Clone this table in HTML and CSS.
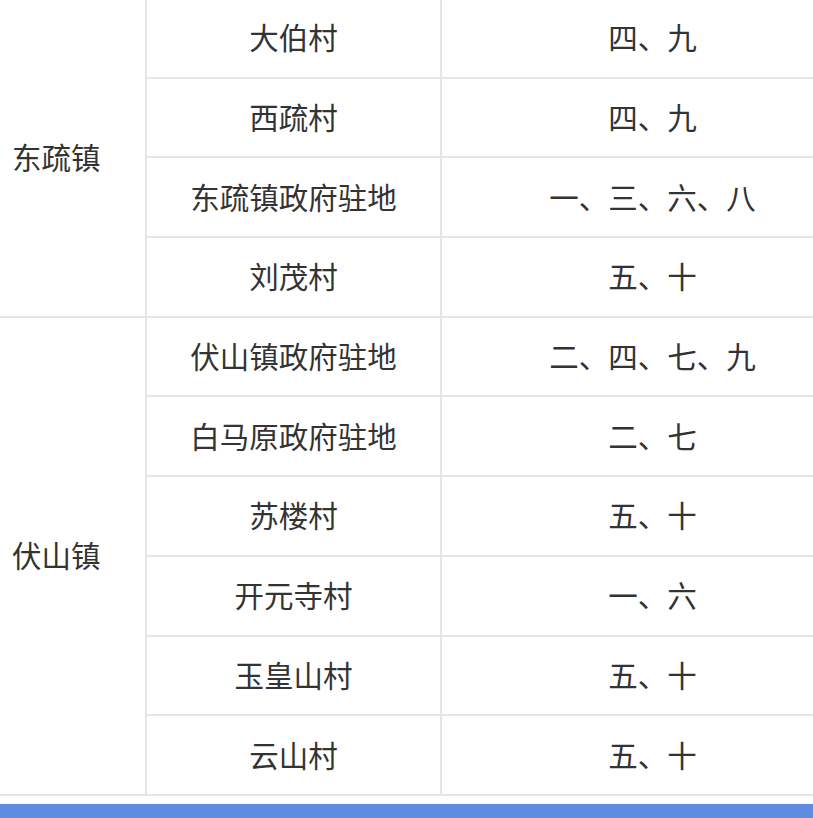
FILE: index.html
```html
<!DOCTYPE html>
<html lang="zh-CN">
<head>
<meta charset="utf-8">
<link rel="stylesheet" href="styles.css">
<title>班车</title>
</head>
<body>
<div class="page">
  <table class="sched">
    <colgroup>
      <col class="c1"><col class="c2"><col class="c3">
    </colgroup>
    <tbody>
      <tr><td class="town" rowspan="4">东疏镇</td><td>大伯村</td><td>四、九</td></tr>
      <tr><td>西疏村</td><td>四、九</td></tr>
      <tr><td>东疏镇政府驻地</td><td>一、三、六、八</td></tr>
      <tr><td>刘茂村</td><td>五、十</td></tr>
      <tr><td class="town" rowspan="6">伏山镇</td><td>伏山镇政府驻地</td><td>二、四、七、九</td></tr>
      <tr><td>白马原政府驻地</td><td>二、七</td></tr>
      <tr><td>苏楼村</td><td>五、十</td></tr>
      <tr><td>开元寺村</td><td>一、六</td></tr>
      <tr><td>玉皇山村</td><td>五、十</td></tr>
      <tr><td>云山村</td><td>五、十</td></tr>
    </tbody>
  </table>
  <div class="bar"></div>
</div>
</body>
</html>
```

FILE: styles.css
```css
html, body {
  margin: 0;
  padding: 0;
  background: #ffffff;
}
.page {
  width: 813px;
  height: 818px;
  overflow: hidden;
  font-family: "Noto Sans CJK SC", "Noto Sans", sans-serif;
  color: #333333;
}
.sched {
  border-collapse: collapse;
  table-layout: fixed;
  width: 866px;
  margin-top: -3px;
  margin-left: -3px;
}
.c1 { width: 148px; }
.c2 { width: 295px; }
.c3 { width: 423px; }
.sched td {
  border: 2px solid #e6e6e6;
  height: 79.7px;
  padding: 0 0 3px 0;
  text-align: center;
  vertical-align: middle;
  font-size: 29.5px;
  line-height: 34px;
  box-sizing: border-box;
}
.sched td.town {
  text-align: left;
  padding-left: 13px;
}
.bar {
  margin-top: 8px;
  height: 20px;
  background: #5d8de3;
}
```
